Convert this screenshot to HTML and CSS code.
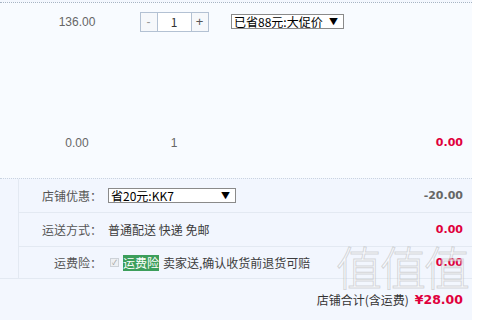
FILE: index.html
```html
<!DOCTYPE html>
<html lang="zh-CN">
<head>
    <meta charset="UTF-8">
    <title>购物车 - 店铺</title>
    <link rel="stylesheet" href="styles.css">
</head>
<body>
<div class="order">
    <div class="items">
        <div class="item item-first">
            <div class="cell price">136.00</div>
            <div class="cell qty">
                <div class="amount">
                    <span class="amount-btn minus">-</span>
                    <span class="amount-val">1</span>
                    <span class="amount-btn plus">+</span>
                </div>
            </div>
            <div class="cell promo">
                <div class="fake-select promo-select">
                    <span>已省88元:大促价</span>
                    <i class="arrow">▼</i>
                </div>
            </div>
            <div class="cell sum"></div>
        </div>
        <div class="item item-second">
            <div class="cell price">0.00</div>
            <div class="cell qty"><span class="qty-num">1</span></div>
            <div class="cell promo"></div>
            <div class="cell sum red">0.00</div>
        </div>
    </div>

    <div class="shop">
        <div class="shop-side"></div>
        <div class="shop-rows">
            <div class="shop-row">
                <div class="label">店铺优惠：</div>
                <div class="content">
                    <div class="fake-select coupon-select">
                        <span>省20元:KK7</span>
                        <i class="arrow">▼</i>
                    </div>
                </div>
                <div class="money gray">-20.00</div>
            </div>
            <div class="shop-row">
                <div class="label">运送方式：</div>
                <div class="content">普通配送 快递 免邮</div>
                <div class="money red">0.00</div>
            </div>
            <div class="shop-row">
                <div class="label">运费险：</div>
                <div class="content">
                    <span class="check">✓</span>
                    <span class="tag">运费险</span>
                    <span class="note">卖家送,确认收货前退货可赔</span>
                </div>
                <div class="money red">0.00</div>
            </div>
        </div>
    </div>

    <div class="total">
        <span class="total-label">店铺合计(含运费)</span>
        <span class="total-num red">¥28.00</span>
    </div>

    <div class="watermark">值值值</div>
</div>
</body>
</html>
```

FILE: styles.css
```css
body {
    margin: 0;
    background: #fff;
    font-family: "Liberation Sans", "Noto Sans CJK SC", sans-serif;
    font-size: 12px;
    color: #3c3c3c;
}

.order {
    position: relative;
    width: 472px;
    height: 320px;
    background: #f3f7fe;
    overflow: hidden;
}

/* 商品区 */
.items {
    margin-top: 2px;
    border-top: 1px dotted #a7b4c4;
    background: #f8fbff;
    padding-bottom: 15px;
}

.item {
    display: grid;
    grid-template-columns: 110px 84px 135px 1fr;
    padding: 0 9px 0 22px;
}

.item-first {
    height: 111px;
    padding-top: 9px;
    align-items: start;
}

.item-second {
    height: 40px;
    align-items: center;
}

.cell {
    line-height: 20px;
}

.price {
    text-align: center;
    color: #666;
}

.qty {
    display: flex;
    justify-content: center;
    color: #666;
}

.amount {
    display: flex;
    height: 18px;
    border: 1px solid #b3c1d3;
    background: #fff;
}

.amount-btn {
    width: 16px;
    line-height: 18px;
    text-align: center;
    background: #f6f8fb;
    color: #999;
}

.amount-btn.plus {
    color: #555;
    font-size: 13px;
}

.amount-val {
    width: 33px;
    line-height: 18px;
    text-align: center;
    border-left: 1px solid #b3c1d3;
    border-right: 1px solid #b3c1d3;
    color: #333;
    font-family: "Noto Sans CJK SC", sans-serif;
}

.promo {
    padding-left: 15px;
}

.fake-select {
    display: flex;
    align-items: center;
    justify-content: space-between;
    height: 13px;
    border: 1px solid #8a8a8a;
    background: #fff;
    color: #000;
    font-family: "Noto Sans CJK SC", sans-serif;
    font-size: 12px;
    line-height: 13px;
    white-space: nowrap;
    padding: 0 5px 0 2px;
}

.arrow {
    font-style: normal;
    font-size: 9px;
}

.promo-select {
    width: 104px;
    margin-top: 2px;
}

.coupon-select {
    width: 119px;
}

.sum {
    text-align: right;
}

.red {
    color: #e0003c;
    font-family: "DejaVu Sans", sans-serif;
    font-weight: bold;
    font-size: 11px;
}

.gray {
    color: #666;
    font-family: "DejaVu Sans", sans-serif;
    font-weight: bold;
    font-size: 11px;
}

/* 店铺优惠 / 运送 */
.shop {
    display: flex;
    border-top: 1px dotted #c9d3e0;
    border-bottom: 1px solid #e3e9f2;
    background: #f2f6fe;
}

.shop-side {
    width: 18px;
    border-right: 1px solid #e3e9f2;
}

.shop-rows {
    flex: 1;
}

.shop-row {
    display: flex;
    align-items: center;
    height: 33px;
    border-bottom: 1px solid #e3e9f2;
    padding-right: 9px;
    font-family: "Noto Sans CJK SC", sans-serif;
}

.shop-row:last-child {
    border-bottom: none;
    height: 31px;
}

.label {
    width: 83px;
    text-align: right;
    color: #555;
}

.content {
    flex: 1;
    display: flex;
    align-items: center;
    margin-left: 6px;
    color: #3c3c3c;
}

.money {
    text-align: right;
}

.check {
    width: 7px;
    height: 7px;
    margin: 0 4px 0 2px;
    border: 1px solid #cdd2d8;
    background: #eef0f3;
    color: #999;
    font-size: 7px;
    line-height: 7px;
    text-align: center;
}

.tag {
    background: #3c9e5b;
    color: #fff;
    line-height: 16px;
}

.note {
    margin-left: 4px;
}

/* 合计 */
.total {
    display: flex;
    justify-content: flex-end;
    align-items: center;
    height: 40px;
    padding-right: 9px;
}

.total-label {
    font-family: "Noto Sans CJK SC", sans-serif;
    color: #333;
    margin-right: 6px;
}

.total-num {
    font-size: 12.5px;
}

.watermark {
    position: absolute;
    left: 336px;
    top: 232px;
    font-family: "Noto Sans CJK SC", sans-serif;
    font-size: 46px;
    font-weight: 300;
    letter-spacing: -2px;
    color: rgba(255, 255, 255, 0.55);
    -webkit-text-stroke: 1px rgba(170, 170, 170, 0.45);
    pointer-events: none;
}
```
